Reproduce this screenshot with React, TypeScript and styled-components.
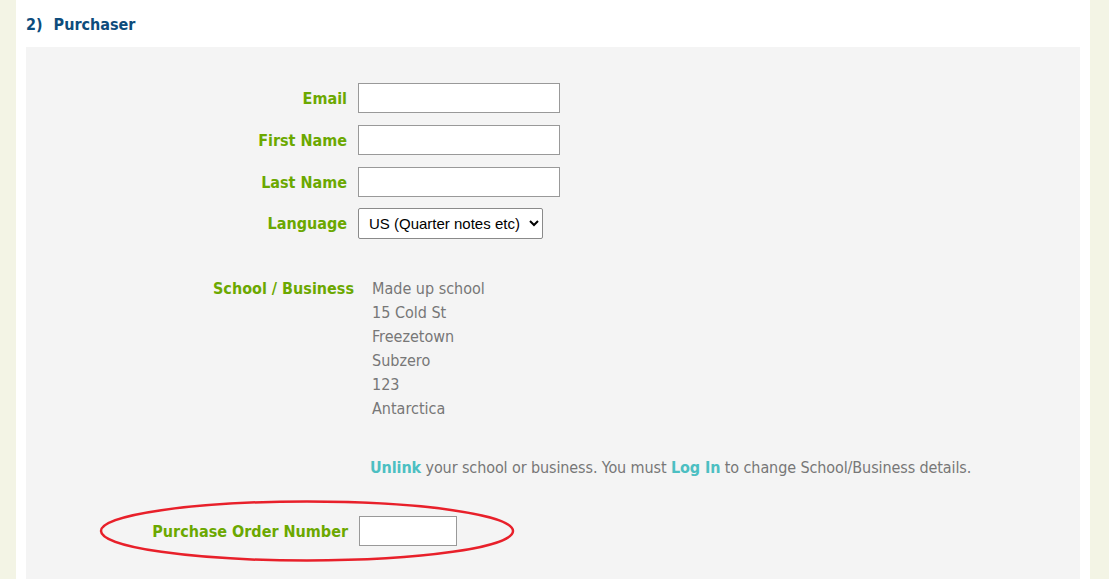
import * as React from 'react';
import styled, { createGlobalStyle } from 'styled-components';

const GlobalStyle = createGlobalStyle`
  html, body {
    margin: 0;
    padding: 0;
    background: #f3f4e5;
  }
  body {
    font-family: "DejaVu Sans Condensed", "DejaVu Sans", sans-serif;
  }
`;

const Page = styled.div`
  width: 1074px;
  min-height: 579px;
  margin-left: 16px;
  background: #fff;
  padding: 0 10px;
  box-sizing: border-box;
  overflow: hidden;
`;

const Heading = styled.h2`
  margin: 0;
  height: 47px;
  display: flex;
  align-items: center;
  gap: 11px;
  padding-top: 2px;
  box-sizing: border-box;
  font-size: 16px;
  font-weight: bold;
  color: #0d4c7c;
`;

const Panel = styled.div`
  background: #f4f4f4;
  height: 532px;
  padding-top: 30px;
  box-sizing: border-box;
  position: relative;
`;

const Row = styled.div<{ $h?: number }>`
  display: flex;
  align-items: center;
  height: ${p => p.$h ?? 42}px;
`;

const Label = styled.label<{ $w?: number; $gap?: number }>`
  width: ${p => p.$w ?? 321}px;
  margin-right: ${p => p.$gap ?? 11}px;
  text-align: right;
  font-size: 16px;
  font-weight: bold;
  color: #6ba800;
  flex-shrink: 0;
`;

const TextBox = styled.input<{ $w?: number }>`
  width: ${p => p.$w ?? 202}px;
  height: 30px;
  box-sizing: border-box;
  border: 1px solid #999;
  background: #fff;
  padding: 2px 4px;
  margin: 0;
  font-size: 15px;
`;

const Select = styled.select`
  height: 31px;
  width: 185px;
  box-sizing: border-box;
  border: 1px solid #8a8a8a;
  border-radius: 2px;
  background: #fff;
  padding: 0 4px 0 6px;
  font-family: "Liberation Sans", Arial, sans-serif;
  font-size: 15px;
  color: #000;
`;

const SchoolBlock = styled.div`
  display: flex;
  align-items: baseline;
  margin-top: 33px;
`;

const Address = styled.div`
  font-size: 16px;
  line-height: 24px;
  color: #777;
`;

const Note = styled.p`
  margin: 35px 0 0 344px;
  font-size: 16px;
  line-height: 24px;
  letter-spacing: -0.1px;
  color: #777;
`;

const Link = styled.a`
  color: #4cbfc2;
  font-weight: bold;
  text-decoration: none;
`;

const PORow = styled(Row)`
  margin-top: 35px;
  height: 32px;
  position: relative;
`;

const Ellipse = styled.svg`
  position: absolute;
  left: 72px;
  top: -16px;
  pointer-events: none;
`;

const addressLines = ['Made up school', '15 Cold St', 'Freezetown', 'Subzero', '123', 'Antarctica'];

export default function App() {
  return (
    <>
      <GlobalStyle />
      <Page>
        <Heading>
          <span>2)</span>
          <span>Purchaser</span>
        </Heading>
        <Panel>
          <Row>
            <Label>Email</Label>
            <TextBox />
          </Row>
          <Row>
            <Label>First Name</Label>
            <TextBox />
          </Row>
          <Row>
            <Label>Last Name</Label>
            <TextBox />
          </Row>
          <Row $h={41}>
            <Label>Language</Label>
            <Select defaultValue="us">
              <option value="us">US (Quarter notes etc)</option>
            </Select>
          </Row>
          <SchoolBlock>
            <Label $w={328} $gap={18}>School / Business</Label>
            <Address>
              {addressLines.map(l => (
                <div key={l}>{l}</div>
              ))}
            </Address>
          </SchoolBlock>
          <Note>
            <Link href="#">Unlink</Link> your school or business. You must <Link href="#">Log In</Link> to change
            School/Business details.
          </Note>
          <PORow>
            <Label $w={322}>Purchase Order Number</Label>
            <TextBox $w={98} />
            <Ellipse width="420" height="66" viewBox="0 0 420 66">
              <ellipse cx="209" cy="32" rx="206" ry="29.5" fill="none" stroke="#e8202a" strokeWidth="2.5" />
            </Ellipse>
          </PORow>
        </Panel>
      </Page>
    </>
  );
}
